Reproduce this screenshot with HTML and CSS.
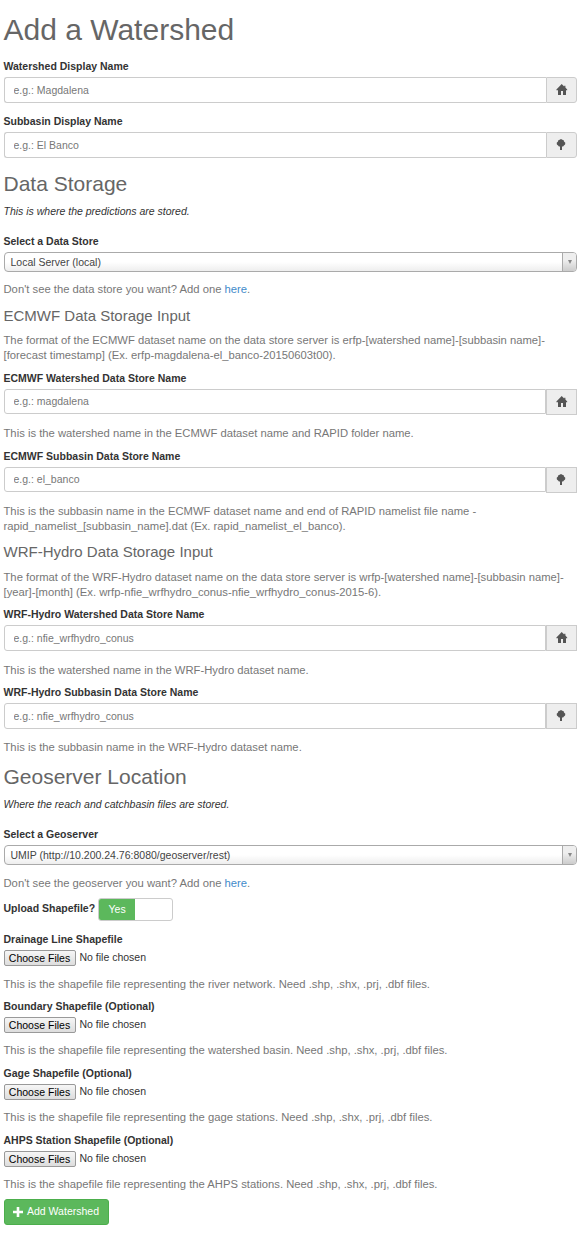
FILE: index.html
```
<!DOCTYPE html>
<html lang="en">
<head>
<meta charset="utf-8">
<title>Add a Watershed</title>
<link rel="stylesheet" href="styles.css">
</head>
<body>
<svg class="sprite" aria-hidden="true">
  <symbol id="home" viewBox="0 0 12 12"><path d="M5.7 0 8.2 2.4V1.8H9.4V3.6L11.2 5.4V6.3H10V11H7V7H5V11H2V6.3H.4V5.4Z"/></symbol>
  <symbol id="tree" viewBox="0 0 12 12"><path d="M5 0 6.3.8 7.7 1.2 8 2.5 9.3 3.7 9.1 5.5 7.9 6.4 7.1 7.5 6 7.6V11H4V7.6L2.9 7.5 2.1 6.4.9 5.5.7 3.7 2 2.5 2.3 1.2 3.7.8Z"/></symbol>
</svg>
<main>
  <h1>Add a Watershed</h1>
  <div class="field">
    <label for="name">Watershed Display Name</label>
    <div class="group"><input id="name" type="text" placeholder="e.g.: Magdalena"><span class="addon round"><svg><use href="#home"/></svg></span></div>
  </div>
  <div class="field">
    <label for="sub">Subbasin Display Name</label>
    <div class="group"><input id="sub" type="text" placeholder="e.g.: El Banco"><span class="addon round"><svg><use href="#tree"/></svg></span></div>
  </div>

  <h3>Data Storage</h3>
  <p class="note">This is where the predictions are stored.</p>
  <div class="field">
    <label>Select a Data Store</label>
    <div class="select"><span>Local Server (local)</span><i class="arrow"></i></div>
    <p class="help">Don't see the data store you want? Add one <a href="#">here</a>.</p>
  </div>

  <h4>ECMWF Data Storage Input</h4>
  <p class="help intro">The format of the ECMWF dataset name on the data store server is erfp-[watershed name]-[subbasin name]-<br>[forecast timestamp] (Ex. erfp-magdalena-el_banco-20150603t00).</p>
  <div class="field tight">
    <label for="ew">ECMWF Watershed Data Store Name</label>
    <div class="group split"><input id="ew" type="text" placeholder="e.g.: magdalena"><span class="addon"><svg><use href="#home"/></svg></span></div>
    <p class="help">This is the watershed name in the ECMWF dataset name and RAPID folder name.</p>
  </div>
  <div class="field tight">
    <label for="es">ECMWF Subbasin Data Store Name</label>
    <div class="group split"><input id="es" type="text" placeholder="e.g.: el_banco"><span class="addon"><svg><use href="#tree"/></svg></span></div>
    <p class="help">This is the subbasin name in the ECMWF dataset name and end of RAPID namelist file name -<br>rapid_namelist_[subbasin_name].dat (Ex. rapid_namelist_el_banco).</p>
  </div>

  <h4 class="second">WRF-Hydro Data Storage Input</h4>
  <p class="help intro wrf">The format of the WRF-Hydro dataset name on the data store server is wrfp-[watershed name]-[subbasin name]-<br>[year]-[month] (Ex. wrfp-nfie_wrfhydro_conus-nfie_wrfhydro_conus-2015-6).</p>
  <div class="field tight roomy">
    <label for="ww">WRF-Hydro Watershed Data Store Name</label>
    <div class="group split even"><input id="ww" type="text" placeholder="e.g.: nfie_wrfhydro_conus"><span class="addon"><svg><use href="#home"/></svg></span></div>
    <p class="help">This is the watershed name in the WRF-Hydro dataset name.</p>
  </div>
  <div class="field tight">
    <label for="ws">WRF-Hydro Subbasin Data Store Name</label>
    <div class="group split even"><input id="ws" type="text" placeholder="e.g.: nfie_wrfhydro_conus"><span class="addon"><svg><use href="#tree"/></svg></span></div>
    <p class="help">This is the subbasin name in the WRF-Hydro dataset name.</p>
  </div>

  <h3 class="geo">Geoserver Location</h3>
  <p class="note">Where the reach and catchbasin files are stored.</p>
  <div class="field geo-select">
    <label>Select a Geoserver</label>
    <div class="select"><span>UMIP (http://10.200.24.76:8080/geoserver/rest)</span><i class="arrow"></i></div>
    <p class="help">Don't see the geoserver you want? Add one <a href="#">here</a>.</p>
  </div>
  <div class="toggle-row"><label>Upload Shapefile?</label><span class="toggle"><b>Yes</b></span></div>

  <div class="files">
    <div class="file"><label>Drainage Line Shapefile</label>
      <div class="picker"><button type="button">Choose Files</button><span>No file chosen</span></div>
      <p class="help">This is the shapefile file representing the river network. Need .shp, .shx, .prj, .dbf files.</p></div>
    <div class="file"><label>Boundary Shapefile (Optional)</label>
      <div class="picker"><button type="button">Choose Files</button><span>No file chosen</span></div>
      <p class="help">This is the shapefile file representing the watershed basin. Need .shp, .shx, .prj, .dbf files.</p></div>
    <div class="file"><label>Gage Shapefile (Optional)</label>
      <div class="picker"><button type="button">Choose Files</button><span>No file chosen</span></div>
      <p class="help">This is the shapefile file representing the gage stations. Need .shp, .shx, .prj, .dbf files.</p></div>
    <div class="file"><label>AHPS Station Shapefile (Optional)</label>
      <div class="picker"><button type="button">Choose Files</button><span>No file chosen</span></div>
      <p class="help">This is the shapefile file representing the AHPS stations. Need .shp, .shx, .prj, .dbf files.</p></div>
  </div>
  <button class="submit" type="button"><svg viewBox="0 0 10 10"><path d="M3.7 0H6.3V3.7H10V6.3H6.3V10H3.7V6.3H0V3.7H3.7Z"/></svg>Add Watershed</button>
</main>
</body>
</html>
```
FILE: styles.css
```
* { box-sizing: border-box; }
body { margin: 0; background: #fff; color: #333; font: 10.5px/15px "Liberation Sans", Arial, sans-serif; }
main { width: 577px; padding: 13px 0 8px 3.5px; }
.sprite { display: none; }
h1, h3, h4 { margin: 0; font-weight: 400; color: #666; line-height: 23px; }
h1 { font-size: 30px; line-height: 33px; margin-bottom: 13px; }
h3 { font-size: 21px; margin: 14px 0 9px; }
h4 { font-size: 15px; line-height: 17px; margin: -1px 0 9px; }
h4.second { margin-top: 9px; margin-bottom: 10px; }
h3.geo { margin-top: 10px; margin-bottom: 9px; }
p { margin: 0; }
.note { font-style: italic; margin-bottom: 15px; }
label { display: block; font-weight: 700; margin-bottom: 3px; }
.field { margin-bottom: 11px; }
.field.tight { margin-bottom: 8px; }
.help { font-size: 11.25px; color: #777; }
.field .help { margin-top: 11px; }
.intro { margin-bottom: 8px; }
.intro.wrf { margin-bottom: 7px; }
.field.roomy { margin-bottom: 7px; }
.field.roomy .help { margin-top: 12px; }
a { color: #428bca; text-decoration: none; }

.group { display: flex; align-items: flex-start; height: 26px; }
.group input { flex: 1; min-width: 0; height: 100%; padding: 0 9px 1px; border: 1px solid #ccc; border-right: 0; border-radius: 3px 0 0 3px; font: inherit; color: #555; outline: 0; }
.group input::placeholder { color: #777; opacity: 1; }
.addon { display: flex; align-items: center; justify-content: center; width: 31px; height: 26px; border: 1px solid #ccc; background: #eee; }
.addon.round { border-radius: 0 3px 3px 0; }
.addon svg { width: 12px; height: 12px; margin-left: 1px; fill: #555; }
.split input { height: 25px; border-right: 1px solid #ccc; }
.split.even input { height: 26px; }

.select { display: flex; height: 20px; border: 1px solid #aaa; border-radius: 4px; background: linear-gradient(#fff 50%, #eee); color: #444; overflow: hidden; }
.select span { flex: 1; padding-left: 6px; line-height: 19px; }
.arrow { display: flex; align-items: center; justify-content: center; width: 14px; border-left: 1px solid #aaa; background: linear-gradient(#eee 40%, #ccc); }
.arrow::before { content: ""; border: solid transparent; border-width: 4px 2.5px 0; border-top-color: #888; }
.field .select + .help { margin-top: 10px; }
.geo-select .select + .help { margin-top: 11px; }

.toggle-row { display: flex; align-items: flex-start; height: 23px; margin-top: -4px; }
.toggle-row label { margin: 3px 3px 0 0; }
.toggle { width: 75px; height: 23px; border: 1px solid #ccc; border-radius: 3px; overflow: hidden; display: flex; }
.toggle b { width: 36px; background: #5cb85c; color: #fff; font-weight: 400; text-align: center; line-height: 21px; }

.files { margin-top: 11px; }
.file { height: 66.85px; }
.file label { margin-bottom: 3px; }
.picker { display: flex; height: 16px; gap: 4px; }
.picker button { width: 72px; height: 16px; padding: 0; border: 1px solid #999; border-radius: 2px; background: linear-gradient(#f6f6f6, #ddd); font: 10.5px/14px "Liberation Sans", Arial, sans-serif; color: #000; }
.file .help { margin-top: 10.6px; }
.submit { display: flex; align-items: center; gap: 4px; width: 105px; height: 26px; margin-top: -.4px; padding: 0 8.5px; border: 1px solid #4cae4c; border-radius: 3px; background: #5cb85c; color: #fff; font: inherit; white-space: nowrap; }
.submit svg { width: 10px; height: 10px; flex: none; fill: #fff; }
```
